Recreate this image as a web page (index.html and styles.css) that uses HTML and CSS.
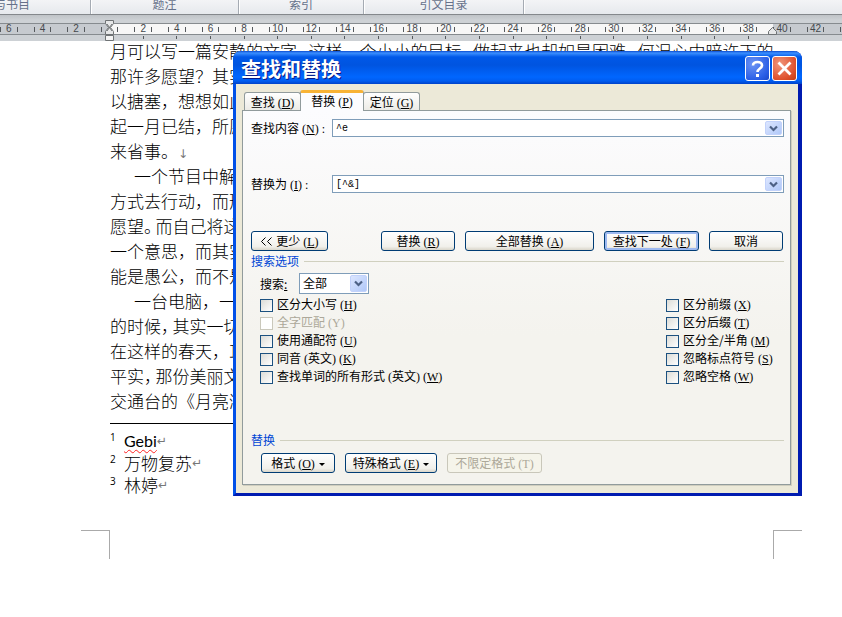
FILE: index.html
```html
<!DOCTYPE html>
<html lang="zh-CN">
<head>
<meta charset="utf-8">
<title>查找和替换</title>
<link rel="stylesheet" href="styles.css">
</head>
<body>
<header class="ribbon">
  <div class="group group-bib">引文与书目</div>
  <div class="group group-caption">题注</div>
  <div class="group group-index">索引</div>
  <div class="group group-toa">引文目录</div>
</header>

<div class="ruler">
  <div class="strip">
    <div class="scale">
      <span class="unit">6</span><span class="unit">4</span><span class="unit">2</span><span class="unit"><b></b></span>
      <span class="unit tab">2</span><span class="unit tab">4</span><span class="unit tab">6</span><span class="unit tab">8</span><span class="unit tab">10</span>
      <span class="unit tab">12</span><span class="unit tab">14</span><span class="unit tab">16</span><span class="unit tab">18</span><span class="unit tab">20</span>
      <span class="unit tab">22</span><span class="unit tab">24</span><span class="unit tab">26</span><span class="unit tab">28</span><span class="unit tab">30</span>
      <span class="unit tab">32</span><span class="unit tab">34</span><span class="unit tab">36</span><span class="unit tab">38</span><span class="unit">40</span>
      <span class="unit">42</span><span class="unit">44</span>
    </div>
  </div>
  <svg class="indent-left" width="9" height="21" viewBox="0 0 9 21">
    <path d="M.5.5h8v3L5.500 7.500 8.500 11.500v3h-8v-3L3.500 7.500.5 3.500z" fill="#e6e7e8" stroke="#6f7375"/>
    <path d="M2 4l5 7M7 4l-5 7" stroke="#6f7375" fill="none"/>
    <path d="M.5 15.500h8v5h-8z" fill="#f4f4f4" stroke="#6f7375"/>
  </svg>
  <svg class="indent-right" width="9" height="8" viewBox="0 0 9 8">
    <path d="M4.500.5l4 4v3h-8v-3z" fill="#e6e7e8" stroke="#6f7375"/>
  </svg>
</div>

<main class="page">
  <div class="text">
    <p>月可以写一篇安静的文字<span class="tight">，</span>这样一个小小的目标<span class="tight">，</span>做起来也却如是困难<span class="tight">，</span>何况心中暗许下的<br>那许多愿望？其实<br>以搪塞，想想如此<br>起一月已结，所愿<br>来省事。<span class="mark">↓</span></p>
    <p class="indented">一个节目中解<br>方式去行动，而形<br>愿望<span class="tight">。</span>而自己将这<br>一个意思，而其实<br>能是愚公，而不是</p>
    <p class="indented">一台电脑，一<br>的时候<span class="tight">，</span>其实一切<br>在这样的春天，耳<br>平实<span class="tight">，</span>那份美丽文<br>交通台的《月亮湾</p>
  </div>
  <hr class="note-rule">
  <ol class="notes">
    <li><sup>1</sup><span class="latin">Gebi</span><span class="mark">↵</span></li>
    <li><sup>2</sup><span>万物复苏</span><span class="mark">↵</span></li>
    <li><sup>3</sup><span>林婷</span><span class="mark">↵</span></li>
  </ol>
  <div class="corners"><i class="corner-left"></i><i class="corner-right"></i></div>
</main>

<section class="dialog" role="dialog" aria-labelledby="dialog-title">
  <div class="titlebar">
    <h1 id="dialog-title">查找和替换</h1>
    <button class="caption help" type="button" aria-label="帮助">
      <svg width="15" height="18" viewBox="0 0 15 18"><path d="M3 5.500C3 .8 12 .8 12 5.500c0 3-4.500 3-4.500 6.500" fill="none" stroke="#fff" stroke-width="2.600"/><path d="M6 14h3v3H6z" fill="#fff"/></svg>
    </button>
    <button class="caption close" type="button" aria-label="关闭">
      <svg width="15" height="15" viewBox="0 0 15 15"><path d="M1.500 1.500l12 12M13.500 1.500l-12 12" stroke="#fff" stroke-width="2.800"/></svg>
    </button>
  </div>
  <form class="body">
    <div class="tabs" role="tablist">
      <button type="button" role="tab" class="tabbtn find">查找<span class="k">(<u>D</u>)</span></button>
      <button type="button" role="tab" class="tabbtn active" aria-selected="true">替换<span class="k">(<u>P</u>)</span></button>
      <button type="button" role="tab" class="tabbtn goto">定位<span class="k">(<u>G</u>)</span></button>
    </div>
    <div class="panel">
      <div class="field">
        <label for="what">查找内容<span class="k">(<u>N</u>)<span class="colon">:</span></span></label>
        <div class="combo"><input id="what" type="text" value="^e"><button type="button" class="drop" aria-label="展开"><svg width="9" height="7" viewBox="0 0 9 7"><path d="M1 1.500l3.500 3.500L8 1.500" fill="none" stroke="#4d6185" stroke-width="2.200"/></svg></button></div>
      </div>
      <div class="field">
        <label for="with">替换为<span class="k">(<u>I</u>)<span class="colon">:</span></span></label>
        <div class="combo"><input id="with" type="text" value="[^&amp;]"><button type="button" class="drop" aria-label="展开"><svg width="9" height="7" viewBox="0 0 9 7"><path d="M1 1.500l3.500 3.500L8 1.500" fill="none" stroke="#4d6185" stroke-width="2.200"/></svg></button></div>
      </div>
      <div class="actions">
        <button type="button" class="btn less"><svg width="13" height="9" viewBox="0 0 13 9"><path d="M5.500.5l-4 4 4 4M11.500.5l-4 4 4 4" fill="none" stroke="#000"/></svg>&nbsp;更少<span class="k">(<u>L</u>)</span></button>
        <button type="button" class="btn medium">替换<span class="k">(<u>R</u>)</span></button>
        <button type="button" class="btn all">全部替换<span class="k">(<u>A</u>)</span></button>
        <button type="button" class="btn next">查找下一处<span class="k">(<u>F</u>)</span></button>
        <button type="button" class="btn medium">取消</button>
      </div>
      <h2 class="section">搜索选项</h2>
      <div class="direction">
        <label for="dir">搜索<u>:</u></label>
        <div class="choice"><select id="dir"><option>全部</option></select><span class="drop"><svg width="9" height="7" viewBox="0 0 9 7"><path d="M1 1.500l3.500 3.500L8 1.500" fill="none" stroke="#4d6185" stroke-width="2.200"/></svg></span></div>
      </div>
      <div class="options">
        <div class="column">
          <label class="check"><input type="checkbox">区分大小写<span class="k">(<u>H</u>)</span></label>
          <label class="check off"><input type="checkbox" disabled>全字匹配<span class="k">(Y)</span></label>
          <label class="check"><input type="checkbox">使用通配符<span class="k">(<u>U</u>)</span></label>
          <label class="check"><input type="checkbox">同音<span class="k">(</span>英文<span class="end">)</span><span class="k">(<u>K</u>)</span></label>
          <label class="check"><input type="checkbox">查找单词的所有形式<span class="k">(</span>英文<span class="end">)</span><span class="k">(<u>W</u>)</span></label>
        </div>
        <div class="column right">
          <label class="check"><input type="checkbox">区分前缀<span class="k">(<u>X</u>)</span></label>
          <label class="check"><input type="checkbox">区分后缀<span class="k">(<u>T</u>)</span></label>
          <label class="check"><input type="checkbox">区分全/半角<span class="k">(<u>M</u>)</span></label>
          <label class="check"><input type="checkbox">忽略标点符号<span class="k">(<u>S</u>)</span></label>
          <label class="check"><input type="checkbox">忽略空格<span class="k">(<u>W</u>)</span></label>
        </div>
      </div>
      <h2 class="section replace">替换</h2>
      <div class="formats">
        <button type="button" class="btn format">格式<span class="k">(<u>O</u>)</span><i class="caret"></i></button>
        <button type="button" class="btn special">特殊格式<span class="k">(<u>E</u>)</span><i class="caret"></i></button>
        <button type="button" class="btn none" disabled>不限定格式<span class="k">(T)</span></button>
      </div>
    </div>
  </form>
</section>
</body>
</html>
```
FILE: styles.css
```css
* { box-sizing: border-box; }

body {
  margin: 0;
  min-height: 100vh;
  position: relative;
  overflow: hidden;
  background: #fff;
  color: #000;
  font-family: "Noto Sans CJK SC", sans-serif;
  font-size: 12px;
}

button, input, select { font: inherit; color: inherit; margin: 0; padding: 0; }

/* ribbon */
.ribbon {
  display: flex;
  height: 14px;
  overflow: hidden;
  background: linear-gradient(#f3f4f6, #e6e9ed);
  color: #66718a;
  line-height: 12px;
}
.group {
  flex: none;
  height: 16px;
  margin-top: -2px;
  text-align: center;
  border-right: 1px solid #a5abb3;
  box-shadow: 1px 0 #fff;
}
.group-bib { width: 181px; margin-left: -90px; }
.group-caption { width: 148px; }
.group-index { width: 125px; }
.group-toa { width: 160px; }

/* ruler */
.ruler {
  position: relative;
  height: 27px;
  padding-top: 8px;
  overflow: hidden;
  border-top: 1px solid #84888c;
  background: linear-gradient(#bfc3c7, #cdd1d5 5px);
}
.strip {
  height: 12px;
  border-top: 1px solid #868b8f;
  border-bottom: 1px solid #868b8f;
  background: linear-gradient(90deg, #c6cacf 109px, #f7f7f7 109px 773px, #c6cacf 773px);
}
.scale {
  display: grid;
  grid-template-columns: repeat(26, 1fr);
  width: 874px;
  margin-left: -8px;
}
.unit {
  position: relative;
  display: flex;
  align-items: center;
  justify-content: space-between;
  height: 10px;
  padding: 0 8px;
  font: 10px/10px "Liberation Sans", sans-serif;
  color: #44484c;
}
.unit::before, .unit::after { content: ""; width: 1px; height: 5px; background: #55595d; }
.tab { background: linear-gradient(#55595d, #55595d) 50% 100% / 1px 3px no-repeat; height: 15px; padding-bottom: 5px; }
.indent-left { position: absolute; left: 105px; top: 5px; }
.indent-right { position: absolute; left: 768px; top: 12px; }

/* document */
.page { font-size: 17px; line-height: 25px; }
.text { margin: -3px 40px 0 110px; font-weight: 300; white-space: nowrap; }
.text p { margin: 0; }
.indented { text-indent: 24px; }
.tight { margin-right: 3px; font-feature-settings: "halt"; }
.mark { color: #777; font: 12px/12px "DejaVu Sans", sans-serif; }
.note-rule { width: 192px; height: 1px; margin: 10px 0 6px 110px; border: 0; background: #000; }
.notes { margin: 0 0 0 110px; padding: 0; list-style: none; line-height: 22px; font-weight: 300; font-size: 17px; }
.notes li { display: flex; align-items: center; height: 22px; }
.notes sup { width: 14px; height: 22px; font: 10px/14px "Open Sans", sans-serif; }
.latin {
  font-family: Lato, sans-serif;
  font-size: 16px;
  font-weight: 400;
  line-height: 20px;
  text-decoration: underline wavy #f22 1px;
  text-underline-offset: 2px;
}
.corners { display: flex; justify-content: space-between; margin: 34px 40px 0 81px; }
.corners i { width: 29px; height: 29px; border-top: 1px solid #aaa; }
.corner-left { border-right: 1px solid #aaa; }
.corner-right { border-left: 1px solid #aaa; }

/* dialog window */
.dialog {
  position: absolute;
  left: 233px;
  top: 51px;
  width: 569px;
  border: solid #0a3fd8;
  border-width: 0 4px 3px 3px;
  border-color: #0a3fd8 #001bb0 #001bb0 #0050e8;
  border-radius: 8px 8px 0 0;
  background: #ece9d8;
  line-height: 14px;
}
.titlebar {
  display: flex;
  align-items: center;
  gap: 2px;
  height: 33px;
  margin: 0 -4px 0 -3px;
  padding: 2px 5px 0 8px;
  border-radius: 8px 8px 0 0;
  background: linear-gradient(#0a4bd0, #3c90ff 2px, #0058e8 6px, #0054e0 14px, #0066ff 26px, #005cf0 30px, #0042c8);
}
.titlebar h1 {
  flex: 1;
  margin: 0;
  color: #fff;
  font-size: 20px;
  line-height: 24px;
  text-shadow: 1px 1px #0a1883;
}
.caption {
  display: flex;
  align-items: center;
  justify-content: center;
  width: 25px;
  height: 25px;
  border: 1px solid #fff;
  border-radius: 3px;
}
.help { background: radial-gradient(circle at 30% 30%, #6c94f4, #2a5ee6 70%, #1c48c8); }
.close { background: radial-gradient(circle at 30% 30%, #f0977c, #e05330 65%, #c23a10); }

.body { padding: 6px 7px 8px 6px; }
.k { margin-left: 3px; font-family: "Liberation Serif", serif; font-size: 12px; line-height: 12px; }
.end { font-family: "Liberation Serif", serif; line-height: 12px; }
.colon { margin-left: 3px; }

/* tabs */
.tabs { display: flex; align-items: flex-end; padding-left: 2px; height: 20px; }
.tabbtn {
  height: 18px;
  border: 1px solid #919b9c;
  border-bottom: 0;
  border-radius: 3px 3px 0 0;
  background: linear-gradient(#fff, #ecebe6);
  line-height: 14px;
}
.find { width: 57px; }
.goto { width: 57px; }
.active {
  position: relative;
  width: 64px;
  height: 21px;
  margin: 0 -1px -1px;
  padding-bottom: 2px;
  border-top: 3px solid #f8b335;
  background: #fcfcfe;
}

/* panel */
.panel {
  padding: 8px 6px 11px 8px;
  border: 1px solid #919b9c;
  background: linear-gradient(#fcfcfe, #f4f3ee 60%);
  box-shadow: 1px 1px #d0cebf;
}
.field { display: flex; align-items: center; margin-bottom: 38px; }
.field label { width: 81px; }
.combo {
  display: flex;
  flex: 1;
  height: 18px;
  padding: 1px;
  border: 1px solid #7f9db9;
  background: #fff;
}
.combo input {
  flex: 1;
  min-width: 0;
  padding: 2px 0 0 2px;
  border: 0;
  background: none;
  outline: 0;
  font-family: "Liberation Mono", monospace;
  font-size: 10px;
}
.drop {
  display: flex;
  align-items: center;
  justify-content: center;
  width: 17px;
  border: 1px solid #c2d2fb;
  border-radius: 2px;
  background: linear-gradient(135deg, #dce6ff, #b0c8f8);
}

.btn {
  height: 20px;
  border: 1px solid #003c74;
  border-radius: 3px;
  background: linear-gradient(#fff, #f1f0eb 80%, #dad6ca);
  line-height: 14px;
  white-space: nowrap;
}
.actions { display: flex; gap: 10px; margin-right: 1px; }
.less { width: 77px; margin-right: auto; }
.medium { width: 74px; }
.all { width: 129px; }
.next { width: 95px; box-shadow: inset 0 0 0 2px #9db9f0; }

.section {
  display: flex;
  align-items: center;
  gap: 5px;
  margin: 3px 0 0;
  color: #0046d5;
  font-size: 12px;
  font-weight: 400;
  line-height: 14px;
}
.section::after { content: ""; flex: 1; height: 1px; background: #d0d0bf; }

.direction { display: flex; align-items: center; padding-left: 9px; margin-top: 5px; }
.direction label { width: 39px; }
.choice { position: relative; width: 70px; height: 21px; }
.choice select {
  appearance: none;
  width: 100%;
  height: 100%;
  padding: 0 0 2px 3px;
  border: 1px solid #7f9db9;
  border-radius: 0;
  background: #fff;
}
.choice .drop { position: absolute; top: 2px; right: 2px; bottom: 2px; pointer-events: none; }

.options { display: flex; justify-content: space-between; padding: 1px 0 0 9px; }
.column { display: flex; flex-direction: column; }
.right { width: 118px; }
.check { height: 18px; line-height: 18px; white-space: nowrap; }
.check input {
  appearance: none;
  width: 13px;
  height: 13px;
  margin-right: 4px;
  vertical-align: -3px;
  border: 1px solid #1c5180;
  background: linear-gradient(135deg, #dcdcd7, #fff);
}
.off { color: #aca899; }
.off input { border-color: #cac8bb; background: #fff; }

.replace { margin-top: 48px; }
.formats { display: flex; gap: 10px; padding: 6px 0 0 10px; }
.format { width: 74px; }
.special { width: 92px; }
.none { width: 95px; border-color: #c9c7ba; background: #f5f4ea; color: #aca899; }
.caret {
  display: inline-block;
  margin-left: 4px;
  vertical-align: 2px;
  border: solid transparent;
  border-width: 3px 3px 0;
  border-top-color: #000;
}
```
